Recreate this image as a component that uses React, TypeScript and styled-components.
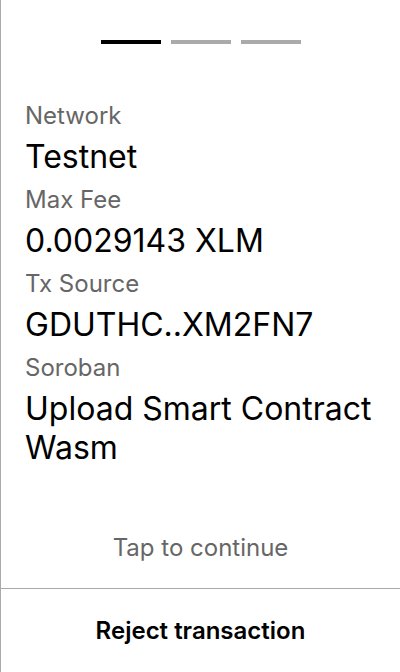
import React from "react";
import styled, { createGlobalStyle } from "styled-components";

const Global = createGlobalStyle`
  html, body { margin: 0; padding: 0; background: #fff; }
  body { font-family: Inter, "Noto Sans", sans-serif; }
`;

const Screen = styled.div`
  width: 400px;
  height: 672px;
  box-sizing: border-box;
  border-left: 1px solid #aaaaaa;
  display: flex;
  flex-direction: column;
  background: #fff;
`;

const Steps = styled.div`
  display: flex;
  justify-content: center;
  gap: 10px;
  padding-top: 40px;
`;

const Step = styled.div<{ $active?: boolean }>`
  width: 60px;
  height: 4px;
  background: ${(p) => (p.$active ? "#000" : "#aaaaaa")};
`;

const Details = styled.div`
  padding: 48px 16px 0 24px;
  display: flex;
  flex-direction: column;
`;

const Label = styled.div`
  font-size: 24px;
  line-height: 29px;
  padding: 9px 0 7px;
  color: #666;
`;

const Value = styled.div`
  font-size: 32px;
  line-height: 39px;
  color: #000;
`;

const Hint = styled.div`
  flex: 1;
  display: flex;
  align-items: flex-end;
  justify-content: center;
  padding-bottom: 26px;
  font-size: 24px;
  line-height: 29px;
  color: #666;
`;

const Footer = styled.div`
  height: 83px;
  border-top: 1px solid #aaaaaa;
  display: flex;
  align-items: center;
  justify-content: center;
  font-size: 24px;
  font-weight: 600;
  color: #000;
`;

const rows = [
  { label: "Network", value: "Testnet" },
  { label: "Max Fee", value: "0.0029143 XLM" },
  { label: "Tx Source", value: "GDUTHC..XM2FN7" },
  { label: "Soroban", value: "Upload Smart Contract Wasm" },
];

export default function App() {
  return (
    <>
      <Global />
      <Screen>
        <Steps>
          <Step $active />
          <Step />
          <Step />
        </Steps>
        <Details>
          {rows.map((r) => (
            <React.Fragment key={r.label}>
              <Label>{r.label}</Label>
              <Value>{r.value}</Value>
            </React.Fragment>
          ))}
        </Details>
        <Hint>Tap to continue</Hint>
        <Footer>Reject transaction</Footer>
      </Screen>
    </>
  );
}
